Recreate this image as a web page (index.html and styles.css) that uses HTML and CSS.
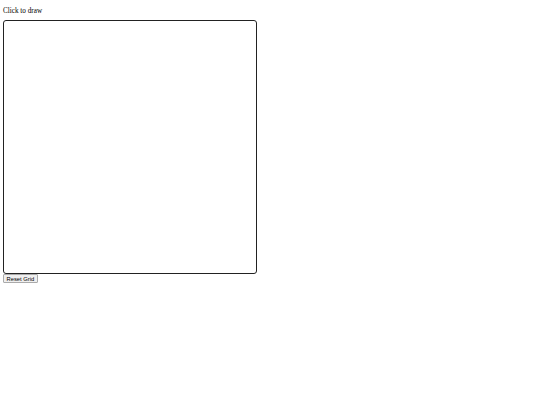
FILE: index.html
```html
<!DOCTYPE html>
<html>
<head>
<meta charset="utf-8">
<link rel="stylesheet" href="styles.css">
</head>
<body>
<div class="label">Click to draw</div>
<div class="grid"></div>
<button class="reset">Reset Grid</button>
</body>
</html>
```
FILE: styles.css
```css
html, body { margin: 0; padding: 0; background: #fff; }
body { padding: 4px 3px; font-family: "Liberation Serif", serif; }
.label { font-size: 7.2px; line-height: 8px; color: #000; margin: 3px 0 5px 0; }
.grid {
  width: 252px;
  height: 252px;
  border: 1.5px solid #222;
  border-radius: 3px;
  background: #fff;
  margin-bottom: 0;
}
.reset {
  display: block;
  font-family: "Liberation Sans", Arial, sans-serif;
  font-size: 5.8px;
  line-height: 6px;
  padding: 0.5px 2.5px;
  margin: 0;
  background: #efefef;
  border: 1px solid #aaa;
  border-radius: 1px;
  color: #000;
}
```
